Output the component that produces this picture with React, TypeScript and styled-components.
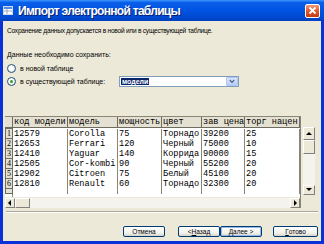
import styled, { createGlobalStyle } from "styled-components";

const GlobalStyle = createGlobalStyle`
  html, body {
    margin: 0;
    padding: 0;
    background: #ece9d8;
  }
  * { box-sizing: border-box; }
`;

const Window = styled.div`
  width: 324px;
  height: 244px;
  display: flex;
  flex-direction: column;
  background: #0831d9;
  overflow: hidden;
`;

const TitleBar = styled.div`
  height: 21px;
  flex: none;
  display: flex;
  align-items: center;
  padding: 0 4px 0 3px;
  gap: 5px;
  background: linear-gradient(180deg, #3d95ff 0%, #0a5fe8 12%, #0054e3 45%, #0049d0 85%, #003dbb 100%);
  color: #fff;
  font-family: "Liberation Sans", Arial, sans-serif;
  font-weight: bold;
  font-size: 12px;
  letter-spacing: -0.7px;
  text-shadow: 1px 1px 0 #0a1e6e;
`;

const Title = styled.span`
  flex: 1;
  white-space: nowrap;
`;

const CloseButton = styled.div`
  width: 15px;
  height: 14px;
  border: 1px solid #fff;
  border-radius: 2px;
  background: linear-gradient(180deg, #f09a7c 0%, #e2582f 50%, #c63a12 100%);
  display: flex;
  align-items: center;
  justify-content: center;
`;

const Frame = styled.div`
  flex: 1;
  display: flex;
  flex-direction: column;
  margin: 0 3px 3px;
  background: #ece9d8;
  font-family: "Liberation Sans", Arial, sans-serif;
  font-size: 7px;
  color: #000;
`;

const Line = styled.div<{ $top: number; $tight?: boolean }>`
  margin: ${(p) => p.$top}px 0 0 4px;
  height: 10px;
  line-height: 10px;
  white-space: nowrap;
  font-size: ${(p) => (p.$tight ? "6.6px" : "7px")};
  letter-spacing: ${(p) => (p.$tight ? "-0.25px" : "0")};
`;

const RadioRow = styled.div<{ $top: number }>`
  display: flex;
  align-items: center;
  gap: 4px;
  height: 11px;
  margin: ${(p) => p.$top}px 0 0 4px;
  white-space: nowrap;
`;

const Radio = styled.span<{ $on?: boolean }>`
  width: 9px;
  height: 9px;
  border-radius: 50%;
  border: 1px solid #1c5180;
  background: radial-gradient(circle at 40% 40%, #fff 30%, #dcdcd0 100%);
  display: flex;
  align-items: center;
  justify-content: center;
  &::after {
    content: "";
    display: ${(p) => (p.$on ? "block" : "none")};
    width: 3px;
    height: 3px;
    border-radius: 50%;
    background: #2aa02a;
  }
`;

const RadioLabel = styled.span`
  width: 95px;
`;

const Combo = styled.div`
  width: 120px;
  height: 11px;
  border: 1px solid #7f9db9;
  background: #fff;
  display: flex;
  align-items: center;
  padding-left: 1px;
`;

const ComboText = styled.span`
  flex: 1;
`;

const Selected = styled.span`
  background: #0a246a;
  color: #fff;
  padding: 0 1px;
  line-height: 8px;
  font-weight: bold;
`;

const ComboButton = styled.span`
  width: 12px;
  height: 9px;
  border-radius: 1px;
  background: linear-gradient(180deg, #d9e5fd 0%, #b8cdf8 100%);
  border: 1px solid #b1c5f2;
  display: flex;
  align-items: center;
  justify-content: center;
`;

const GridArea = styled.div`
  display: flex;
  margin: 29px 0 0 2px;
  gap: 2px;
`;

const GridBox = styled.div`
  width: 296px;
  height: 92px;
  display: flex;
  flex-direction: column;
  border-top: 1px solid #8a8676;
  border-right: 1px solid #8a8676;
  background: #fff;
`;

const GridRow = styled.div<{ $h: number }>`
  display: grid;
  grid-template-columns: 8px 55px 50px 44px 40px 43px 1fr;
  height: ${(p) => p.$h}px;
`;

const HeadCell = styled.div`
  background: #e4e1d2;
  border-right: 1px solid #6e6b60;
  border-bottom: 1px solid #6e6b60;
  font-family: "Liberation Mono", "Courier New", monospace;
  font-size: 8.6px;
  line-height: 11px;
  padding-left: 1px;
  white-space: nowrap;
  overflow: hidden;
`;

const NumCell = styled.div`
  background: #e4e1d2;
  border-right: 1px solid #6e6b60;
  border-bottom: 1px solid #6e6b60;
  border-left: 1px solid #6e6b60;
  font-family: "Liberation Serif", "Times New Roman", serif;
  font-size: 8px;
  line-height: 9px;
  text-align: center;
`;

const Cell = styled.div`
  border-right: 1px solid #8a8676;
  font-family: "Liberation Mono", "Courier New", monospace;
  font-size: 8.6px;
  line-height: 10px;
  padding-left: 1px;
  white-space: nowrap;
  overflow: hidden;
`;

const Filler = styled.div`
  flex: 1;
  display: grid;
  grid-template-columns: 8px 55px 50px 44px 40px 43px 1fr;
`;

const HScroll = styled.div`
  height: 11px;
  flex: none;
  display: flex;
  background: #f4f3ee;
  border-top: 1px solid #ece9d8;
`;

const ScrollBtn = styled.div<{ $w: number; $h: number }>`
  width: ${(p) => p.$w}px;
  height: ${(p) => p.$h}px;
  flex: none;
  background: #ece9d8;
  border: 1px solid;
  border-color: #fff #808080 #808080 #fff;
  display: flex;
  align-items: center;
  justify-content: center;
`;

const Track = styled.div`
  flex: 1;
`;

const VScroll = styled.div`
  width: 12px;
  height: 68px;
  margin-top: 11px;
  display: flex;
  flex-direction: column;
  background: #f4f3ee;
`;

const Separator = styled.div`
  margin: 3px 3px 0 3px;
  border-top: 1px solid #aca899;
  border-bottom: 1px solid #fff;
`;

const Buttons = styled.div`
  display: flex;
  justify-content: flex-end;
  align-items: center;
  margin: 13px 3px 0 0;
`;

const Button = styled.div<{ $w: number; $gap?: number; $focus?: boolean }>`
  width: ${(p) => p.$w}px;
  height: 11px;
  margin-left: ${(p) => p.$gap ?? 0}px;
  border: 1px solid #003c74;
  border-radius: 2px;
  background: linear-gradient(180deg, #fff 0%, #f0f0ea 70%, #d6d0c5 100%);
  box-shadow: ${(p) => (p.$focus ? "inset 0 0 0 1px #98b8ea" : "none")};
  display: flex;
  align-items: center;
  justify-content: center;
  font-size: 6.5px;
  white-space: nowrap;
`;

const Tri = ({ dir }: { dir: "up" | "down" | "left" | "right" }) => {
  const pts = {
    up: "1,5 4,2 7,5",
    down: "1,2 4,5 7,2",
    left: "5,1 2,4 5,7",
    right: "3,1 6,4 3,7",
  }[dir];
  return (
    <svg width="8" height="8" viewBox="0 0 8 8">
      <polygon points={pts} fill="#000" />
    </svg>
  );
};

const columns = ["код модели", "модель", "мощность", "цвет", "зав цена", "торг нацен"];

const rows = [
  ["12579", "Corolla", "75", "Торнадо", "39200", "25"],
  ["12653", "Ferrari", "120", "Черный", "75000", "10"],
  ["12410", "Yaguar", "140", "Коррида", "90000", "15"],
  ["12505", "Cor-kombi", "90", "Черный", "55200", "20"],
  ["12902", "Citroen", "75", "Белый", "45100", "20"],
  ["12810", "Renault", "60", "Торнадо", "32300", "20"],
];

export default function App() {
  return (
    <>
      <GlobalStyle />
      <Window>
        <TitleBar>
          <svg width="10" height="9" viewBox="0 0 10 9">
            <rect x="0.5" y="0.5" width="9" height="8" fill="#fff" stroke="#cfd8ea" />
            <rect x="1" y="1" width="8" height="2" fill="#5b8be0" />
            <line x1="1" y1="5" x2="9" y2="5" stroke="#9ab" />
            <line x1="4" y1="3" x2="4" y2="8" stroke="#9ab" />
          </svg>
          <Title>Импорт электронной таблицы</Title>
          <CloseButton>
            <svg width="9" height="9" viewBox="0 0 9 9">
              <path d="M1.5 1.5 L7.5 7.5 M7.5 1.5 L1.5 7.5" stroke="#fff" strokeWidth="1.8" />
            </svg>
          </CloseButton>
        </TitleBar>
        <Frame>
          <Line $top={5} $tight>
            Сохранение данных допускается в новой или в существующей таблице.
          </Line>
          <Line $top={14}>Данные необходимо сохранить:</Line>
          <RadioRow $top={3}>
            <Radio />
            <RadioLabel>в новой таблице</RadioLabel>
          </RadioRow>
          <RadioRow $top={2}>
            <Radio $on />
            <RadioLabel>в существующей таблице:</RadioLabel>
            <Combo>
              <ComboText>
                <Selected>модели</Selected>
              </ComboText>
              <ComboButton>
                <svg width="6" height="5" viewBox="0 0 6 5">
                  <path d="M0.8 1 L3 3.4 L5.2 1" stroke="#4d6185" strokeWidth="1.2" fill="none" />
                </svg>
              </ComboButton>
            </Combo>
          </RadioRow>
          <GridArea>
            <GridBox>
              <GridRow $h={12}>
                <HeadCell />
                {columns.map((c) => (
                  <HeadCell key={c}>{c}</HeadCell>
                ))}
                <HeadCell />
              </GridRow>
              {rows.map((r, i) => (
                <GridRow $h={10} key={r[0]}>
                  <NumCell>{i + 1}</NumCell>
                  {r.map((v, j) => (
                    <Cell key={j}>{v}</Cell>
                  ))}
                  <Cell />
                </GridRow>
              ))}
              <Filler>
                <NumCell />
                {columns.map((c) => (
                  <Cell key={c} />
                ))}
                <Cell />
              </Filler>
              <HScroll>
                <ScrollBtn $w={10} $h={10}>
                  <Tri dir="left" />
                </ScrollBtn>
                <ScrollBtn $w={15} $h={10} />
                <Track />
                <ScrollBtn $w={10} $h={10}>
                  <Tri dir="right" />
                </ScrollBtn>
              </HScroll>
            </GridBox>
            <VScroll>
              <ScrollBtn $w={12} $h={13}>
                <Tri dir="up" />
              </ScrollBtn>
              <ScrollBtn $w={12} $h={14} />
              <Track />
              <ScrollBtn $w={12} $h={10}>
                <Tri dir="down" />
              </ScrollBtn>
            </VScroll>
          </GridArea>
          <Separator />
          <Buttons>
            <Button $w={42}>Отмена</Button>
            <Button $w={42} $gap={13}>
              &lt; <u>Н</u>азад
            </Button>
            <Button $w={42} $focus>
              Далее &gt;
            </Button>
            <Button $w={45} $gap={11}>
              <u>Г</u>отово
            </Button>
          </Buttons>
        </Frame>
      </Window>
    </>
  );
}
